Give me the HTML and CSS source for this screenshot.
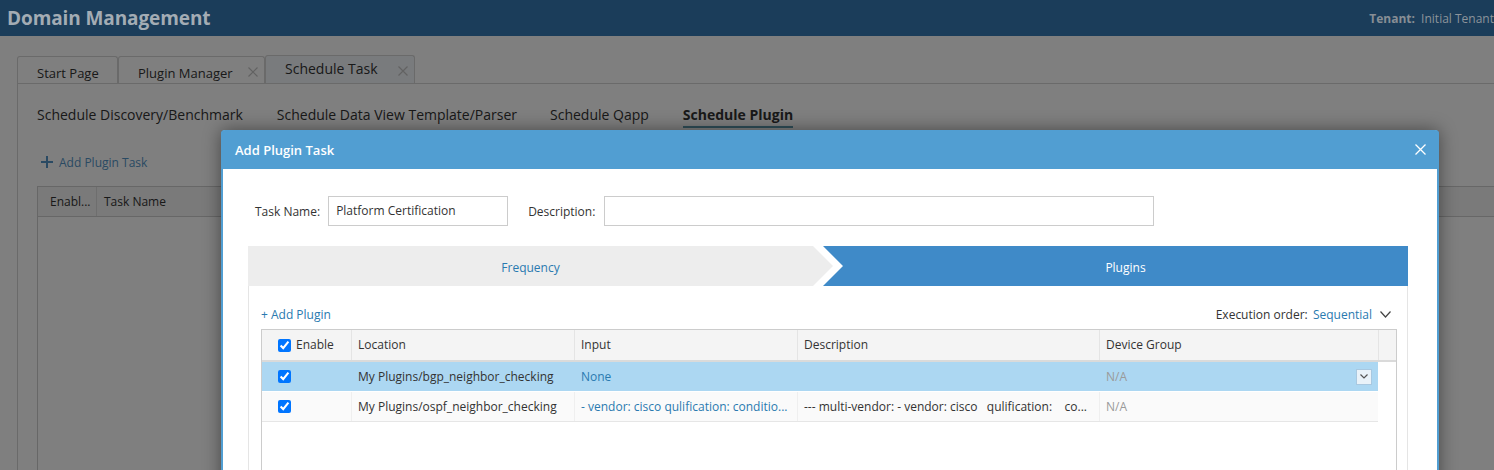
FILE: index.html
```html
<!DOCTYPE html>
<html>
<head>
<meta charset="utf-8">
<title>Domain Management</title>
<link rel="stylesheet" href="styles.css">
</head>
<body>
<header class="topbar">
  <div class="app-title">Domain Management</div>
  <div class="tenant"><b>Tenant:</b> Initial Tenant</div>
</header>

<div class="workspace">
  <div class="tabs">
    <div class="tab tab-start">Start Page</div>
    <div class="tab tab-plugin">Plugin Manager
      <svg class="tab-x" width="10" height="10" viewBox="0 0 10 10"><path d="M0.5 0.5 9.5 9.5M9.5 0.5 0.5 9.5"/></svg>
    </div>
    <div class="tab tab-sched active">Schedule Task
      <svg class="tab-x" width="10" height="10" viewBox="0 0 10 10"><path d="M0.5 0.5 9.5 9.5M9.5 0.5 0.5 9.5"/></svg>
    </div>
  </div>
  <div class="panel">
    <nav class="subtabs">
      <span class="subtab">Schedule Discovery/Benchmark</span>
      <span class="subtab">Schedule Data View Template/Parser</span>
      <span class="subtab">Schedule Qapp</span>
      <span class="subtab current">Schedule Plugin</span>
    </nav>
    <div class="add-task">
      <svg width="12" height="12" viewBox="0 0 12 12"><path d="M6 0V12M0 6H12"/></svg>
      <span>Add Plugin Task</span>
    </div>
    <div class="grid">
      <div class="grid-head">
        <div class="gh gh-enable">Enabl...</div>
        <div class="gh">Task Name</div>
      </div>
    </div>
  </div>
</div>

<div class="overlay"></div>

<div class="modal">
  <div class="modal-head">
    <span class="modal-title">Add Plugin Task</span>
    <svg class="modal-close" width="11" height="11" viewBox="0 0 11 11"><path d="M0.5 0.5 10.5 10.5M10.5 0.5 0.5 10.5"/></svg>
  </div>
  <div class="modal-body">
    <div class="form-row">
      <label class="lbl">Task Name:</label>
      <div class="field field-name">Platform Certification</div>
      <label class="lbl lbl-desc">Description:</label>
      <div class="field field-desc"></div>
    </div>

    <div class="steps">
      <div class="step step-freq">Frequency</div>
      <div class="step step-plugins">Plugins</div>
    </div>

    <div class="step-panel">
      <div class="toolbar">
        <span class="link">+ Add Plugin</span>
        <span class="exec">Execution order: <span class="link seq">Sequential</span>
          <svg class="exec-caret" width="11" height="7" viewBox="0 0 11 7"><path d="M0.5 0.5 5.5 6 10.5 0.5"/></svg>
        </span>
      </div>

      <div class="tbl">
        <div class="tbl-head">
          <div class="th th-enable"><input type="checkbox" checked> <span>Enable</span></div>
          <div class="th">Location</div>
          <div class="th">Input</div>
          <div class="th">Description</div>
          <div class="th">Device Group</div>
          <div class="th th-scroll"></div>
        </div>
        <div class="tbl-body">
          <div class="tr selected">
            <div class="td td-enable"><input type="checkbox" checked></div>
            <div class="td">My Plugins/bgp_neighbor_checking</div>
            <div class="td link">None</div>
            <div class="td"></div>
            <div class="td td-group"><span class="na">N/A</span>
              <span class="dd-btn"><svg width="8" height="5" viewBox="0 0 8 5"><path d="M0.5 0.5 4 4 7.5 0.5"/></svg></span>
            </div>
          </div>
          <div class="tr">
            <div class="td td-enable"><input type="checkbox" checked></div>
            <div class="td">My Plugins/ospf_neighbor_checking</div>
            <div class="td link">- vendor: cisco qulification: conditio...</div>
            <div class="td pre">--- multi-vendor: - vendor: cisco   qulification:    co...</div>
            <div class="td"><span class="na">N/A</span></div>
          </div>
        </div>
      </div>
    </div>
  </div>
</div>
</body>
</html>
```

FILE: styles.css
```css
* { box-sizing: border-box; }
html, body { margin: 0; padding: 0; }
body {
  width: 1494px;
  height: 470px;
  overflow: hidden;
  position: relative;
  background: #fff;
  color: #333;
  font-family: "Open Sans", "Noto Sans", sans-serif;
  font-size: 12px;
}

/* ---------- top bar (shown dimmed, above the overlay) ---------- */
.topbar {
  position: relative;
  z-index: 2;
  height: 36px;
  background: #1b3d5a;
  color: #a3acb4;
  display: flex;
  align-items: center;
  justify-content: space-between;
  padding-left: 7px;
}
.app-title { font-size: 19px; font-weight: 700; letter-spacing: -0.1px; }
.tenant { font-size: 12px; white-space: nowrap; margin-right: 0; color: #8c949b; }
.tenant b { margin-right: 3px; color: #878e95; }

/* ---------- workspace ---------- */
.workspace { padding: 19px 0 0 17px; }
.tabs {
  display: flex;
  align-items: flex-end;
  height: 29px;
  border-bottom: 1px solid #d4d4d4;
}
.tab {
  height: 27px;
  border: 1px solid #d4d4d4;
  border-bottom: 0;
  border-radius: 3px 3px 0 0;
  background: #fff;
  font-size: 13px;
  color: #333;
  padding: 6px 0 0 19px;
  line-height: 20px;
  position: relative;
}
.tab-start { width: 101px; }
.tab-plugin { width: 147px; }
.tab-sched { width: 150px; }
.tab.active {
  height: 28px;
  background: #f3f7fb;
  font-size: 14px;
  padding-top: 3px;
}
.tab-x { position: absolute; right: 6px; top: 10px; }
.tab-x path { stroke: #c4c4c4; stroke-width: 1.2; fill: none; }

.panel {
  border-left: 1px solid #d4d4d4;
  height: 400px;
  padding-left: 19px;
}
.subtabs {
  display: flex;
  gap: 34px;
  padding-top: 21px;
  font-size: 14px;
  line-height: 20px;
}
.subtab { padding-bottom: 1px; border-bottom: 2px solid transparent; color: #333; }
.subtab:nth-child(3) { margin-left: -1px; }
.subtab.current { font-weight: 700; border-bottom-color: #609eb2; }

.add-task {
  margin-top: 25px;
  display: flex;
  align-items: center;
  gap: 6px;
  padding-left: 4px;
  height: 18px;
  color: #5494c6;
  font-size: 12px;
}
.add-task path { stroke: #5494c6; stroke-width: 2; }

.grid {
  margin-top: 15px;
  border: 1px solid #cfcfcf;
  height: 300px;
  width: 1470px;
}
.grid-head {
  display: flex;
  height: 30px;
  background: #f4f4f4;
  border-bottom: 1px solid #cfcfcf;
}
.gh { line-height: 29px; padding-left: 7px; color: #333; }
.gh-enable { width: 59px; padding-left: 12px; border-right: 1px solid #dcdcdc; }

/* ---------- overlay ---------- */
.overlay {
  position: absolute;
  inset: 0;
  z-index: 1;
  background: rgba(0, 0, 0, 0.5);
}

/* ---------- modal ---------- */
.modal {
  position: absolute;
  z-index: 3;
  left: 221px;
  top: 130px;
  width: 1218px;
  height: 360px;
  background: #fff;
  border: 2px solid #519ed2;
  border-top: 0;
  border-radius: 4px 4px 0 0;
  box-shadow: 0 0 18px rgba(0, 0, 0, 0.45);
}
.modal-head {
  height: 39px;
  margin: 0 -2px;
  background: #519ed2;
  border-radius: 4px 4px 0 0;
  display: flex;
  align-items: center;
  justify-content: space-between;
  padding: 0 13px 0 14px;
  color: #fff;
}
.modal-title { font-size: 13px; font-weight: 600; }
.modal-close path { stroke: #fff; stroke-width: 1.3; fill: none; }

.modal-body { padding: 27px 29px 0 25px; }
.form-row {
  display: flex;
  align-items: center;
  padding-left: 7px;
  height: 30px;
}
.lbl { font-size: 12px; color: #333; margin-right: 8px; }
.lbl-desc { margin-left: 20px; margin-right: 9px; }
.field {
  height: 30px;
  border: 1px solid #ccc;
  padding-left: 7px;
  line-height: 28px;
  font-size: 12px;
  color: #333;
}
.field-name { width: 180px; }
.field-desc { width: 550px; }

.steps {
  margin-top: 20px;
  display: flex;
  height: 40px;
  width: 1160px;
}
.step {
  height: 40px;
  padding-top: 4px;
  line-height: 36px;
  text-align: center;
  font-size: 12px;
}
.step-freq {
  width: 585px;
  padding-right: 20px;
  background: #ededed;
  color: #2a7ab0;
  clip-path: polygon(0 0, calc(100% - 20px) 0, 100% 50%, calc(100% - 20px) 100%, 0 100%);
}
.step-plugins {
  flex: 1;
  margin-left: -10px;
  padding-left: 20px;
  background: #3f8ac8;
  color: #fff;
  clip-path: polygon(0 0, 100% 0, 100% 100%, 0 100%, 20px 50%);
}

.step-panel {
  width: 1160px;
  height: 200px;
  border: 1px solid #e5e5e5;
  border-top: 0;
  padding: 19px 10px 0 12px;
}
.toolbar {
  display: flex;
  justify-content: space-between;
  align-items: center;
  height: 18px;
  margin-bottom: 6px;
  padding-right: 6px;
}
.link { color: #2a7ab0; }
.exec { color: #333; display: flex; align-items: center; white-space: pre; }
.seq { margin-left: 2px; }
.exec-caret { margin-left: 8px; }
.exec-caret path { stroke: #444; stroke-width: 1.2; fill: none; }

.tbl {
  width: 1136px;
  height: 160px;
  border: 1px solid #ccc;
}
.tbl-head {
  display: grid;
  grid-template-columns: 89px 223px 223px 302px 279px 1fr;
  height: 32px;
  background: #f4f4f4;
  border-bottom: 2px solid #dadada;
}
.th {
  line-height: 30px;
  padding-left: 6px;
  border-left: 1px solid #e4e4e4;
  color: #333;
  white-space: nowrap;
}
.th:first-child { border-left: 0; }
.th-enable {
  padding-left: 16px;
  display: flex;
  align-items: center;
  gap: 5px;
}
input[type="checkbox"] {
  width: 13px;
  height: 13px;
  margin: 0;
  accent-color: #0075ff;
}

.tbl-body { width: 1116px; }
.tr {
  display: grid;
  grid-template-columns: 89px 223px 223px 302px 279px;
  height: 30px;
  background: #fafafa;
  border-bottom: 1px solid #e6e6e6;
}
.tr.selected { background: #acd7f2; border-bottom-color: #fff; }
.td {
  line-height: 29px;
  padding-left: 6px;
  border-left: 1px solid #efefef;
  white-space: nowrap;
  overflow: hidden;
}
.tr.selected .td { border-left-color: transparent; }
.td:first-child { border-left: 0; }
.td-enable { padding-left: 16px; display: flex; align-items: center; }
.pre { white-space: pre; }
.na { color: #9a9a9a; }
.td-group { display: flex; align-items: center; justify-content: space-between; padding-right: 6px; }
.dd-btn {
  width: 16px;
  height: 16px;
  border: 1px solid #a9c8e0;
  background: #e9f2f9;
  display: flex;
  align-items: center;
  justify-content: center;
}
.dd-btn path { stroke: #555; stroke-width: 1.2; fill: none; }
```
